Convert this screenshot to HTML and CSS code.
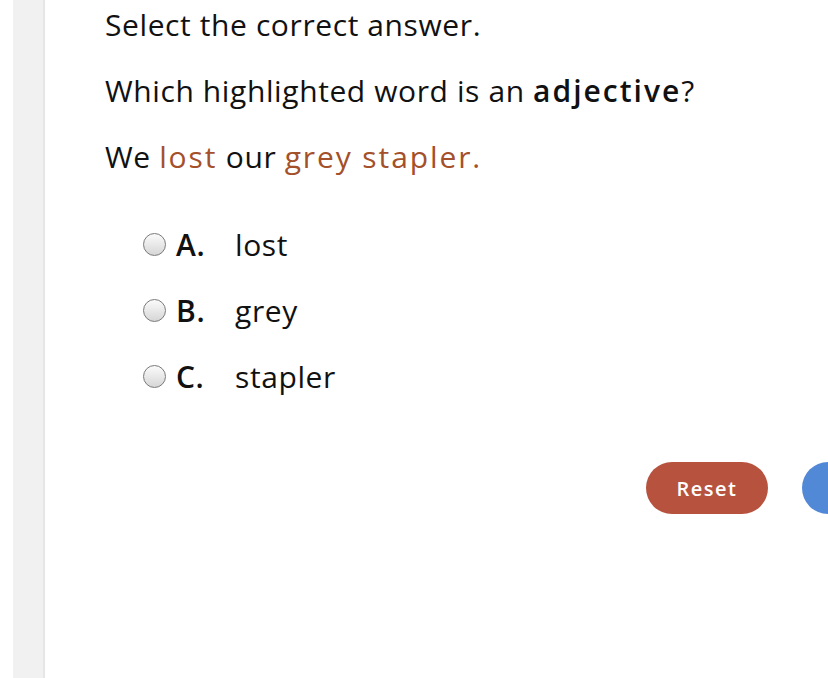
FILE: index.html
```html
<!DOCTYPE html>
<html>
<head>
<meta charset="utf-8">
<link rel="stylesheet" href="styles.css">
</head>
<body>
<div class="page">
  <div class="gutter"></div>
  <div class="strip"></div>
  <main class="content">
    <p class="line">Select the correct answer.</p>
    <p class="line">Which highlighted word is an <b class="strong">adjective</b>?</p>
    <p class="line">We <span class="hl">lost</span> our <span class="hl">grey stapler.</span></p>
    <ul class="options">
      <li class="option"><span class="radio"></span><span class="letter">A.</span><span class="word">lost</span></li>
      <li class="option"><span class="radio"></span><span class="letter">B.</span><span class="word">grey</span></li>
      <li class="option"><span class="radio"></span><span class="letter">C.</span><span class="word">stapler</span></li>
    </ul>
    <div class="actions">
      <button class="btn reset">Reset</button>
      <button class="btn next" aria-label="Next"></button>
    </div>
  </main>
</div>
</body>
</html>
```
FILE: styles.css
```css
html, body {
  margin: 0;
  padding: 0;
  background: #fff;
  overflow: hidden;
}
body {
  width: 828px;
  height: 678px;
  font-family: "Open Sans", "Liberation Sans", sans-serif;
  color: #111;
}
.page {
  display: flex;
  height: 678px;
}
.gutter {
  width: 13px;
  flex: none;
}
.strip {
  width: 30px;
  flex: none;
  background: #f1f1f1;
  border-right: 2px solid #e6e6e6;
}
.content {
  flex: none;
  width: 1000px;
  padding-left: 60px;
}
.line {
  margin: 0 0 16px 0;
  font-size: 30px;
  letter-spacing: 0.6px;
  line-height: 50px;
}
.strong {
  font-weight: 600;
  letter-spacing: 2px;
}
.hl {
  color: #a4502a;
  letter-spacing: 1.9px;
}
.options {
  list-style: none;
  margin: 37px 0 0 0;
  padding: 0 0 0 38px;
}
.option {
  display: flex;
  align-items: center;
  height: 50px;
  margin-bottom: 16px;
  font-size: 30px;
  letter-spacing: 0.6px;
}
.radio {
  width: 21px;
  height: 21px;
  border-radius: 50%;
  border: 1px solid #7a7a7a;
  background: linear-gradient(#fbfbfb, #d6d6d6);
  margin-right: 10px;
  flex: none;
}
.letter {
  width: 59px;
  font-weight: 600;
  flex: none;
}
.actions {
  display: flex;
  gap: 34px;
  margin-top: 61px;
  padding-left: 541px;
}
.btn {
  flex: none;
  width: 122px;
  height: 52px;
  border: none;
  border-radius: 26px;
  font-family: "Open Sans", "Liberation Sans", sans-serif;
  font-size: 20px;
  font-weight: 600;
  letter-spacing: 1.5px;
  color: #fff;
}
.reset {
  background: #b7523e;
}
.next {
  background: #5289d6;
}
```
